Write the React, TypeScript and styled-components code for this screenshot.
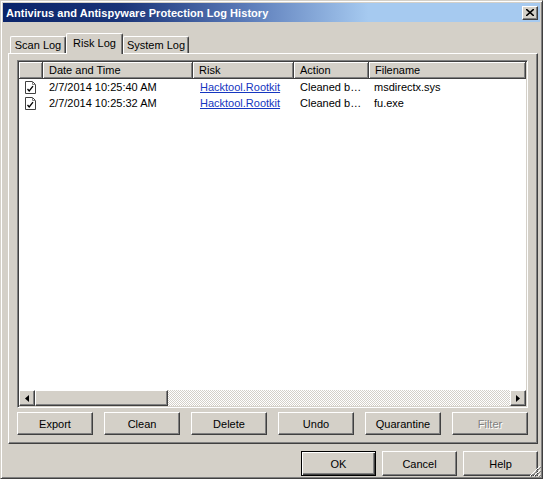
import React from "react";
import styled, { createGlobalStyle, css } from "styled-components";

const Global = createGlobalStyle`
  html, body { margin: 0; padding: 0; background: #d4d0c8; }
  body { font-family: "Liberation Sans", Arial, sans-serif; font-size: 11px; color: #000; }
  * { box-sizing: border-box; }
`;

const raisedBevel = css`
  border-top: 1px solid #fff;
  border-left: 1px solid #fff;
  border-right: 1px solid #404040;
  border-bottom: 1px solid #404040;
  box-shadow: inset -1px -1px 0 #808080;
  background: #d4d0c8;
`;

const Window = styled.div`
  position: relative;
  width: 543px;
  height: 479px;
  background: #d4d0c8;
  border-top: 1px solid #d4d0c8;
  border-left: 1px solid #d4d0c8;
  border-right: 1px solid #404040;
  border-bottom: 1px solid #404040;
  box-shadow: inset 1px 1px 0 #fff, inset -1px -1px 0 #808080;
  padding: 2px 2px 0 2px;
  display: flex;
  flex-direction: column;
`;

const TitleBar = styled.div`
  height: 19px;
  flex: none;
  display: flex;
  align-items: center;
  justify-content: space-between;
  padding: 0 2px 0 3px;
  background: linear-gradient(90deg, #0a246a 0%, #1a3478 22%, #5a7ab8 45%, #a6caf0 68%, #a6caf0 100%);
`;

const TitleText = styled.span`
  color: #fff;
  font-weight: bold;
  font-size: 11px;
  letter-spacing: 0.05px;
  white-space: nowrap;
`;

const CloseButton = styled.div`
  width: 16px;
  height: 14px;
  ${raisedBevel};
  display: flex;
  align-items: center;
  justify-content: center;
`;

const Body = styled.div`
  flex: 1;
  display: flex;
  flex-direction: column;
  padding: 11px 2px 0 5px;
`;

const TabsRow = styled.div`
  display: flex;
  align-items: flex-end;
  height: 21px;
  margin-left: 2px;
  margin-bottom: -1px;
  position: relative;
  z-index: 1;
`;

const Tab = styled.div<{ $active?: boolean; $w: number }>`
  width: ${(p) => p.$w}px;
  height: ${(p) => (p.$active ? 21 : 17)}px;
  margin-bottom: ${(p) => (p.$active ? 0 : 1)}px;
  background: #d4d0c8;
  border-top: 1px solid #fff;
  border-left: 1px solid #fff;
  border-right: 1px solid #404040;
  border-radius: 2px 2px 0 0;
  box-shadow: inset -1px 0 0 #808080;
  display: flex;
  justify-content: center;
  padding-top: ${(p) => (p.$active ? 3 : 2)}px;
  white-space: nowrap;
`;

const Panel = styled.div`
  width: 530px;
  height: 391px;
  border-top: 1px solid #fff;
  border-left: 1px solid #fff;
  border-right: 1px solid #404040;
  border-bottom: 1px solid #404040;
  box-shadow: inset -1px -1px 0 #808080;
  padding: 6px 9px 8px 8px;
  display: flex;
  flex-direction: column;
`;

const ListView = styled.div`
  width: 511px;
  height: 348px;
  background: #fff;
  border-top: 1px solid #808080;
  border-left: 1px solid #808080;
  border-right: 1px solid #fff;
  border-bottom: 1px solid #fff;
  box-shadow: inset 1px 1px 0 #404040, inset -1px -1px 0 #d4d0c8;
  padding: 1px;
  display: flex;
  flex-direction: column;
`;

const cols = "24px 150px 101px 75px 1fr";

const HeaderRow = styled.div`
  display: grid;
  grid-template-columns: ${cols};
  height: 17px;
  flex: none;
`;

const HeaderCell = styled.div`
  background: #d4d0c8;
  border-right: 1px solid #404040;
  border-bottom: 1px solid #404040;
  box-shadow: inset 1px 1px 0 #fff, inset -1px -1px 0 #808080;
  padding: 2px 0 0 6px;
  white-space: nowrap;
  overflow: hidden;
`;

const Rows = styled.div`
  flex: 1;
  display: flex;
  flex-direction: column;
`;

const Row = styled.div`
  display: grid;
  grid-template-columns: ${cols};
  height: 16px;
  align-items: center;
`;

const Cell = styled.div<{ $pad?: number }>`
  padding-left: ${(p) => p.$pad ?? 6}px;
  white-space: nowrap;
  overflow: hidden;
  display: flex;
  align-items: center;
`;

const RiskLink = styled.a`
  color: #1536c0;
  text-decoration: underline;
  cursor: pointer;
`;

const HScroll = styled.div`
  height: 16px;
  flex: none;
  display: flex;
`;

const ArrowButton = styled.div`
  width: 16px;
  height: 16px;
  flex: none;
  ${raisedBevel};
  box-shadow: inset -1px -1px 0 #808080, inset 1px 1px 0 #d4d0c8;
  display: flex;
  align-items: center;
  justify-content: center;
`;

const Thumb = styled.div<{ $w: number }>`
  width: ${(p) => p.$w}px;
  height: 16px;
  flex: none;
  ${raisedBevel};
`;

const Track = styled.div`
  flex: 1;
  background: repeating-conic-gradient(#fff 0 25%, #d4d0c8 0 50%) 0 0 / 2px 2px;
`;

const ActionRow = styled.div`
  display: flex;
  gap: 11px;
  margin-top: 4px;
`;

const Button = styled.div<{ $w?: number; $h?: number; $disabled?: boolean; $default?: boolean }>`
  width: ${(p) => p.$w ?? 76}px;
  height: ${(p) => p.$h ?? 23}px;
  background: #d4d0c8;
  display: flex;
  align-items: center;
  justify-content: center;
  white-space: nowrap;
  color: ${(p) => (p.$disabled ? "#808080" : "#000")};
  text-shadow: ${(p) => (p.$disabled ? "1px 1px 0 #fff" : "none")};
  ${(p) =>
    p.$default
      ? css`
          border: 1px solid #000;
          box-shadow: inset 1px 1px 0 #fff, inset -1px -1px 0 #404040, inset -2px -2px 0 #808080;
        `
      : css`
          border-top: 1px solid #fff;
          border-left: 1px solid #fff;
          border-right: 1px solid #404040;
          border-bottom: 1px solid #404040;
          box-shadow: inset -1px -1px 0 #808080;
        `}
`;

const Footer = styled.div`
  display: flex;
  justify-content: flex-end;
  gap: 6px;
  padding-top: 7px;
`;

const Grip = styled.svg`
  position: absolute;
  right: 1px;
  bottom: 1px;
`;

const DocCheckIcon = () => (
  <svg width="12" height="13" viewBox="0 0 12 13">
    <path d="M0.5 0.5 H7.5 L10.5 3.5 V12.5 H0.5 Z" fill="#fff" stroke="#404040" />
    <path d="M7.5 0.5 V3.5 H10.5" fill="none" stroke="#808080" />
    <path d="M2.5 8 L4.2 10 L8 5.2" fill="none" stroke="#000" strokeWidth="1.3" />
  </svg>
);

const rows = [
  { time: "2/7/2014 10:25:40 AM", risk: "Hacktool.Rootkit", action: "Cleaned b\u2026", file: "msdirectx.sys" },
  { time: "2/7/2014 10:25:32 AM", risk: "Hacktool.Rootkit", action: "Cleaned b\u2026", file: "fu.exe" },
];

export default function App() {
  return (
    <>
      <Global />
      <Window>
        <TitleBar>
          <TitleText>Antivirus and Antispyware Protection Log History</TitleText>
          <CloseButton>
            <svg width="8" height="7" viewBox="0 0 8 7">
              <path d="M0 0 L8 7 M8 0 L0 7" stroke="#000" strokeWidth="1.6" />
            </svg>
          </CloseButton>
        </TitleBar>
        <Body>
          <TabsRow>
            <Tab $w={56}>Scan Log</Tab>
            <Tab $w={57} $active>
              Risk Log
            </Tab>
            <Tab $w={66}>System Log</Tab>
          </TabsRow>
          <Panel>
            <ListView>
              <HeaderRow>
                <HeaderCell />
                <HeaderCell>Date and Time</HeaderCell>
                <HeaderCell>Risk</HeaderCell>
                <HeaderCell>Action</HeaderCell>
                <HeaderCell>Filename</HeaderCell>
              </HeaderRow>
              <Rows>
                {rows.map((r, i) => (
                  <Row key={i}>
                    <Cell $pad={6}>
                      <DocCheckIcon />
                    </Cell>
                    <Cell>{r.time}</Cell>
                    <Cell $pad={7}>
                      <RiskLink>{r.risk}</RiskLink>
                    </Cell>
                    <Cell>{r.action}</Cell>
                    <Cell $pad={5}>{r.file}</Cell>
                  </Row>
                ))}
              </Rows>
              <HScroll>
                <ArrowButton>
                  <svg width="4" height="7" viewBox="0 0 4 7">
                    <path d="M4 0 L0 3.5 L4 7 Z" fill="#000" />
                  </svg>
                </ArrowButton>
                <Thumb $w={133} />
                <Track />
                <ArrowButton>
                  <svg width="4" height="7" viewBox="0 0 4 7">
                    <path d="M0 0 L4 3.5 L0 7 Z" fill="#000" />
                  </svg>
                </ArrowButton>
              </HScroll>
            </ListView>
            <ActionRow>
              <Button>Export</Button>
              <Button>Clean</Button>
              <Button>Delete</Button>
              <Button>Undo</Button>
              <Button>Quarantine</Button>
              <Button $disabled>Filter</Button>
            </ActionRow>
          </Panel>
          <Footer>
            <Button $w={75} $h={25} $default>
              OK
            </Button>
            <Button $w={75} $h={25}>
              Cancel
            </Button>
            <Button $w={75} $h={25}>
              Help
            </Button>
          </Footer>
        </Body>
        <Grip width="12" height="12" viewBox="0 0 12 12">
          <path d="M11 1 L1 11 M11 5 L5 11 M11 9 L9 11" stroke="#fff" strokeWidth="1" />
          <path d="M12 2 L2 12 M12 6 L6 12 M12 10 L10 12" stroke="#808080" strokeWidth="1" />
        </Grip>
      </Window>
    </>
  );
}
